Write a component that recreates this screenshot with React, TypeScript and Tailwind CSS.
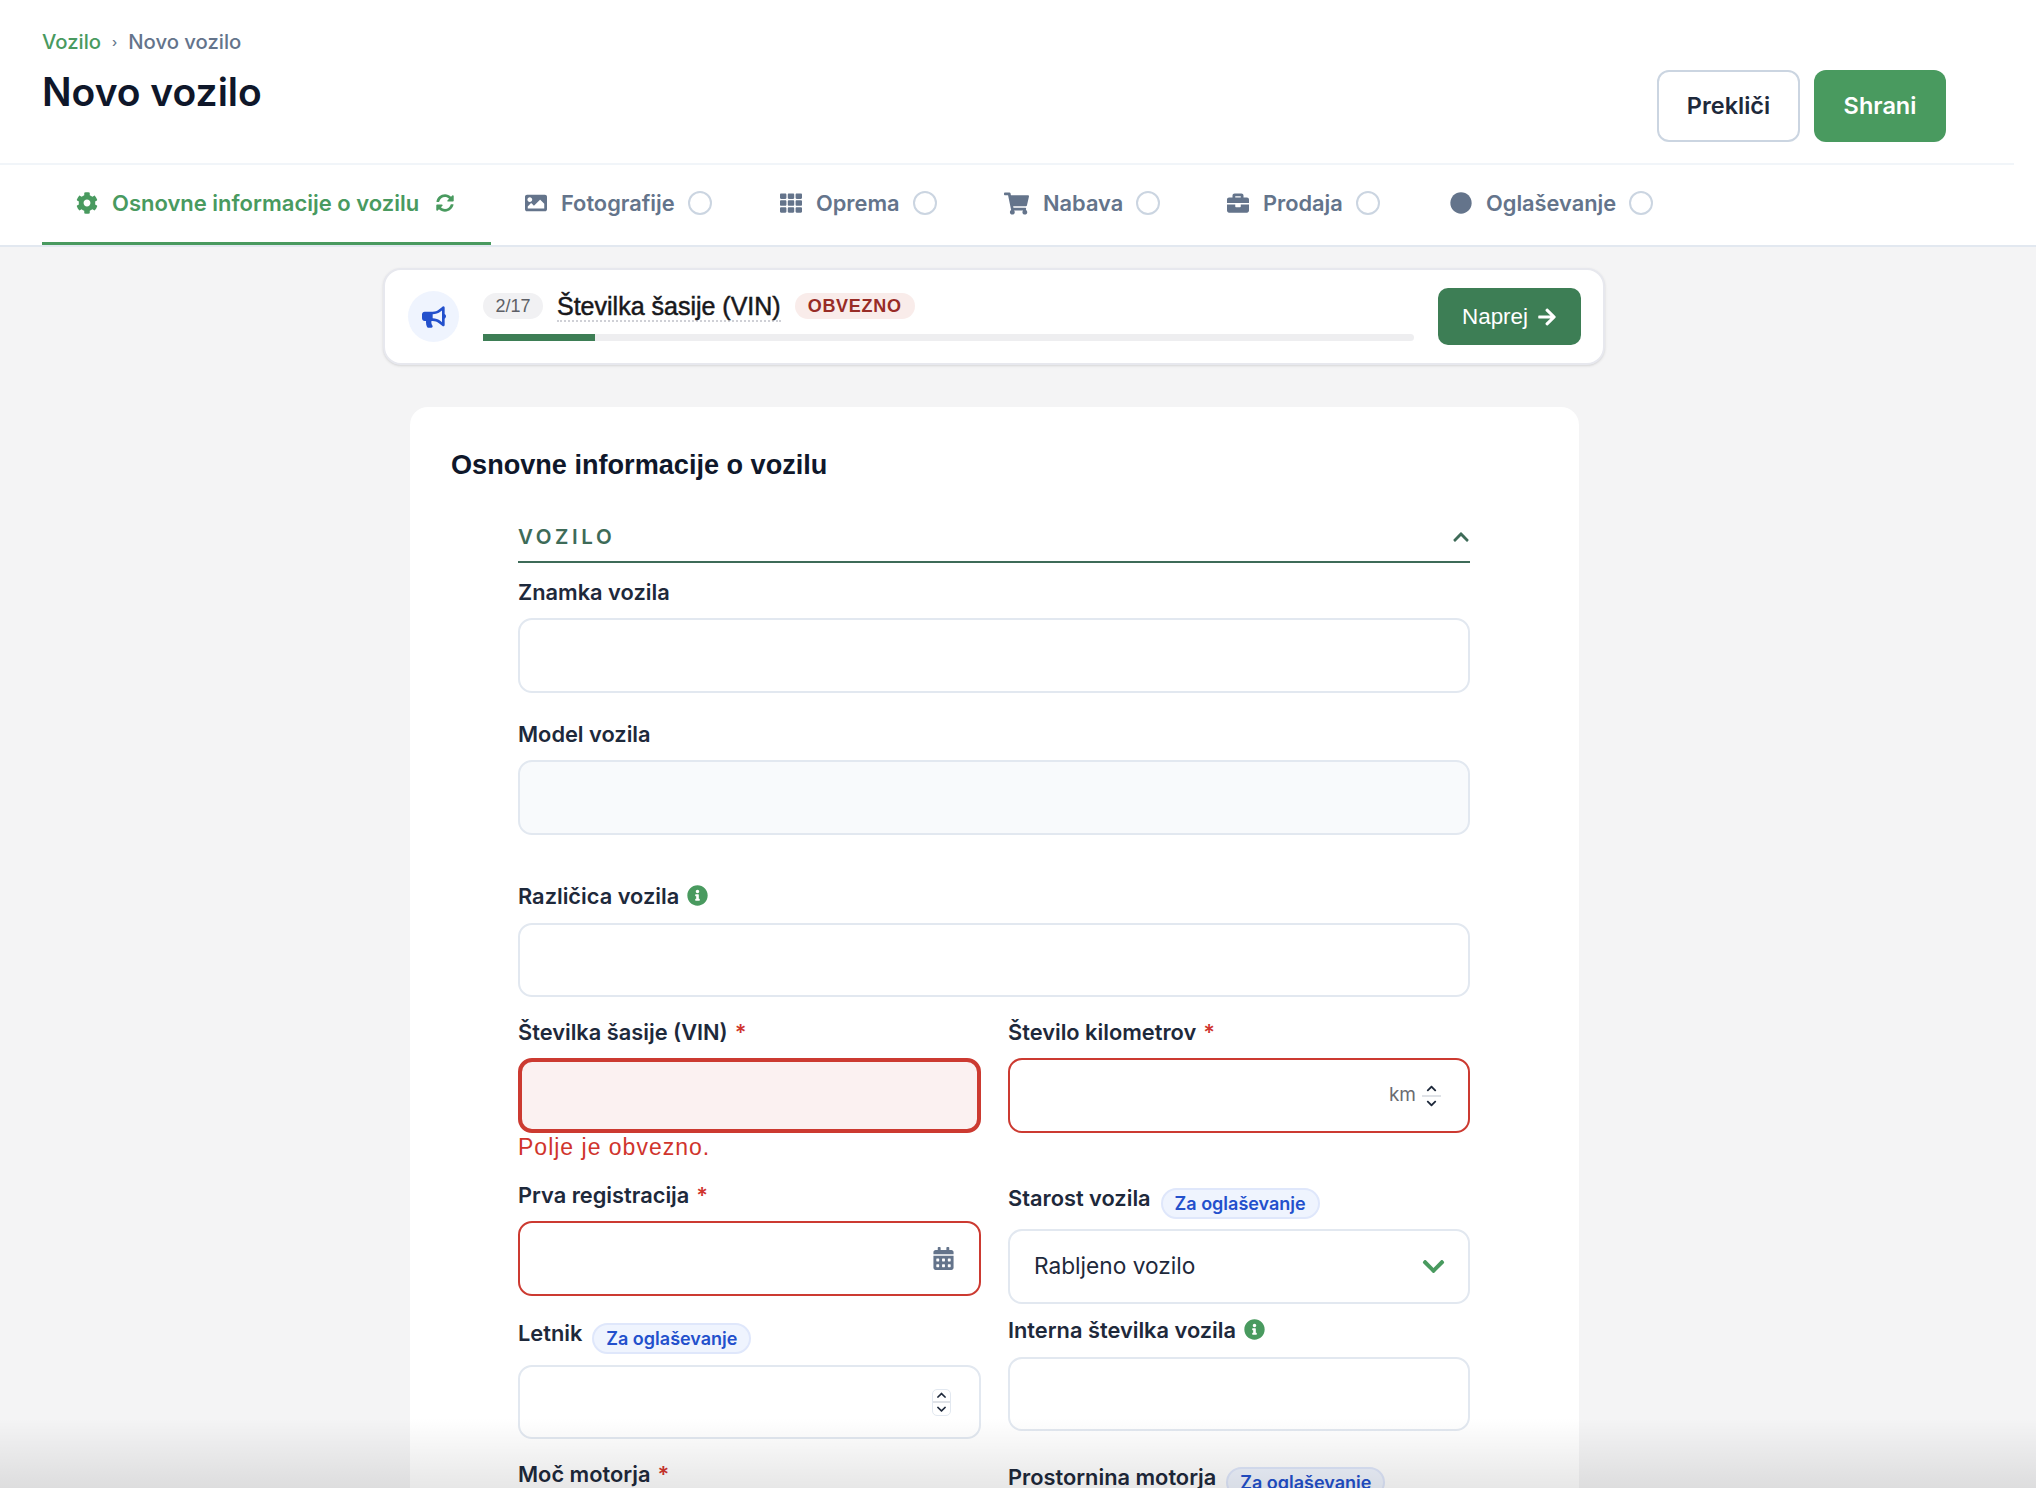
import React from "react";
import {
  FaCog, FaSyncAlt, FaImage, FaTh, FaShoppingCart, FaBriefcase, FaCircle, FaBullhorn,
  FaArrowRight, FaChevronUp, FaChevronDown, FaInfoCircle, FaCalendarAlt,
} from "react-icons/fa";

const Badge = () => (
  <span className="ml-[10px] mt-[3px] inline-flex h-[31px] w-[159px] items-center justify-center rounded-full border-2 border-[#dfe7fb] bg-[#eff4fe] text-[18px] font-semibold text-[#2350cc]">
    Za oglaševanje
  </span>
);

const Label = ({ text, req, info, badge, className = "" }: { text: string; req?: boolean; info?: boolean; badge?: boolean; className?: string }) => (
  <div className={`flex items-start text-[21.8px] font-semibold leading-[26px] text-[#1e293b] ${className}`}>
    <span>{text}</span>
    {req && <span className="ml-[7px] text-[#d0352e]">*</span>}
    {info && <FaInfoCircle className="ml-[8px] mt-[2px] text-[21px] text-[#499a5f]" />}
    {badge && <Badge />}
  </div>
);

const Box = ({ tone = "border-2 border-[#e2e8f0] bg-white", className = "h-[75px]", children }: { tone?: string; className?: string; children?: React.ReactNode }) => (
  <div className={`flex items-center rounded-[14px] ${tone} ${className}`}>
    {children}
  </div>
);

const RED = "border-2 border-[#cc3a31] bg-white";

const Stepper = ({ boxed }: { boxed?: boolean }) => (
  <span className={`flex h-[27px] w-[19px] flex-col items-center justify-center rounded-[5px] text-[#1e293b] ${boxed ? "border border-[#e2e8f0]" : ""}`}>
    <FaChevronUp className="text-[11px]" />
    <span className="my-[1px] h-[2px] w-full bg-[#dfe2e7]" />
    <FaChevronDown className="text-[11px]" />
  </span>
);

const Tab = ({ icon, text, w, iconBox = "w-[23px] text-[22px]" }: { icon: React.ReactNode; text: string; w: string; iconBox?: string }) => (
  <div className={`flex h-[80px] items-center pb-[4px] pl-[33px] text-[#64748b] ${w}`}>
    <span className={`flex justify-center ${iconBox}`}>{icon}</span>
    <span className="ml-[14px] text-[21.8px] font-semibold">{text}</span>
    <span className="ml-[13px] h-[24px] w-[24px] rounded-full border-2 border-[#cbd5e1]" />
  </div>
);

export default function App() {
  return (
    <div className="relative h-[1488px] w-[2036px] overflow-hidden bg-[#f4f4f5] font-['Inter',sans-serif]">
      <header className="h-[165px] bg-white pr-[22px]">
        <div className="flex h-[165px] items-start justify-between border-b-2 border-[#f1f5f9] pl-[42px]">
          <div>
            <div className="mt-[30px] flex h-[24px] items-center text-[20.3px] font-medium leading-[24px]">
              <span className="text-[#499a5f]">Vozilo</span>
              <span className="mx-[11px] text-[13px] text-[#64748b]">›</span>
              <span className="text-[#64748b]">Novo vozilo</span>
            </div>
            <h1 className="mt-[13px] text-[39px] font-semibold leading-[50px] text-[#0f172a]">Novo vozilo</h1>
          </div>
          <div className="mr-[68px] mt-[70px] flex gap-[14px]">
            <button className="h-[72px] w-[143px] rounded-[12px] border-2 border-[#cbd5e1] bg-white text-[23.5px] font-semibold text-[#1e293b]">Prekliči</button>
            <button className="h-[72px] w-[132px] rounded-[12px] bg-[#499a5f] text-[23.5px] font-semibold text-white">Shrani</button>
          </div>
        </div>
      </header>

      <nav className="flex h-[82px] border-b-2 border-[#e2e8f0] bg-white pl-[42px]">
        <div className="flex h-[80px] w-[449px] items-center border-b-[3px] border-[#499a5f] pb-[1px] pl-[34px] text-[#499a5f]">
          <FaCog className="text-[22px]" />
          <span className="ml-[14px] text-[22px] font-semibold">Osnovne informacije o vozilu</span>
          <FaSyncAlt className="ml-[17px] text-[18px]" />
        </div>
        <Tab icon={<FaImage />} text="Fotografije" w="w-[255px]" />
        <Tab icon={<FaTh />} text="Oprema" w="w-[224px]" />
        <Tab icon={<FaShoppingCart />} text="Nabava" w="w-[223px]" iconBox="w-[26px] text-[25px]" />
        <Tab icon={<FaBriefcase />} text="Prodaja" w="w-[223px]" />
        <Tab icon={<FaCircle />} text="Oglaševanje" w="w-[260px]" />
      </nav>

      <main>
        <div className="ml-[383px] mt-[21px] flex h-[97px] w-[1222px] items-center rounded-[18px] border-2 border-[#e7e8ee] bg-white pl-[23px] pr-[21px] font-['Liberation_Sans',sans-serif] shadow-sm">
          <span className="flex h-[51px] w-[51px] shrink-0 items-center justify-center rounded-full bg-[#eff4fe] text-[24px] text-[#2350cc]">
            <FaBullhorn />
          </span>
          <div className="ml-[24px] w-[931px]">
            <div className="flex h-[27px] items-center">
              <span className="flex h-[26px] w-[60px] items-center justify-center rounded-full bg-[#f1f1f3] text-[18px] text-[#5d5f66]">2/17</span>
              <span className="ml-[14px] mt-[2px] border-b-2 border-dotted border-[#cfd0d6] text-[25px] leading-[28px] text-[#18181b] [-webkit-text-stroke:0.5px_#18181b]">Številka šasije (VIN)</span>
              <span className="ml-[14px] flex h-[26px] w-[120px] items-center justify-center rounded-full bg-[#f9ecea] text-[18px] font-bold tracking-[0.7px] text-[#982c26]">OBVEZNO</span>
            </div>
            <div className="mt-[14px] h-[7px] rounded-full bg-[#eeeef0]">
              <div className="h-[7px] w-[112px] bg-[#3d7e55]" />
            </div>
          </div>
          <button className="ml-[24px] flex h-[57px] w-[143px] items-center justify-center gap-[9px] rounded-[10px] bg-[#3d7e55] text-[22.4px] text-white">
            Naprej <FaArrowRight className="text-[20px]" />
          </button>
        </div>

        <section className="ml-[410px] mt-[42px] h-[1100px] w-[1169px] rounded-[18px] bg-white pl-[41px] pt-[38px]">
          <h2 className="font-['Liberation_Sans',sans-serif] text-[27.1px] font-bold leading-[40px] text-[#0f172a]">Osnovne informacije o vozilu</h2>
          <div className="ml-[67px] mt-[41px] w-[952px]">
            <div className="flex h-[37px] items-start justify-between border-b-2 border-[#3e6b58] text-[#3e6b58]">
              <span className="text-[20.5px] font-semibold leading-[22px] tracking-[3.6px]">VOZILO</span>
              <FaChevronUp className="mt-[2px] text-[18px]" />
            </div>
            <Label text="Znamka vozila" className="mt-[16px]" />
            <div className="mt-[13px]"><Box /></div>
            <Label text="Model vozila" className="mt-[28px]" />
            <div className="mt-[13px]"><Box tone="border-2 border-[#e2e8f0] bg-[#f8fafc]" /></div>
            <Label text="Različica vozila" info className="mt-[48px]" />
            <div className="mt-[14px]"><Box className="h-[74px]" /></div>

            <div className="mt-[22px] grid grid-cols-[463px_462px] gap-x-[27px]">
              <div>
                <Label text="Številka šasije (VIN)" req />
                <div className="mt-[13px]"><Box tone="border-[4px] border-[#cc3a31] bg-[#fbf1f1]" className="h-[75px]" /></div>
                <div className="font-['Liberation_Sans',sans-serif] text-[23px] leading-[28px] tracking-[1px] text-[#d0342c]">Polje je obvezno.</div>
                <Label text="Prva registracija" req className="mt-[21px]" />
                <div className="mt-[13px]">
                  <Box tone={RED} className="h-[75px] justify-end pr-[24px]">
                    <FaCalendarAlt className="text-[23px] text-[#64748b]" />
                  </Box>
                </div>
                <Label text="Letnik" badge className="mt-[24px]" />
                <div className="mt-[11px]">
                  <Box className="h-[74px] justify-end pr-[28px]">
                    <Stepper boxed />
                  </Box>
                </div>
                <Label text="Moč motorja" req className="mt-[22px]" />
              </div>
              <div>
                <Label text="Število kilometrov" req />
                <div className="mt-[13px]">
                  <Box tone={RED} className="h-[75px] justify-end pr-[27px]">
                    <span className="mr-[6px] text-[19px] text-[#6b6b70]">km</span>
                    <Stepper />
                  </Box>
                </div>
                <Label text="Starost vozila" badge className="mt-[52px]" />
                <div className="mt-[10px]">
                  <Box className="h-[75px] justify-between pl-[24px] pr-[22px] text-[22.7px] text-[#1e293b]">
                    <span>Rabljeno vozilo</span>
                    <FaChevronDown className="text-[25px] text-[#499a5f]" />
                  </Box>
                </div>
                <Label text="Interna številka vozila" info className="mt-[13px]" />
                <div className="mt-[14px]"><Box className="h-[74px]" /></div>
                <Label text="Prostornina motorja" badge className="mt-[33px]" />
              </div>
            </div>
          </div>
        </section>
      </main>

      <div className="absolute inset-x-0 bottom-0 h-[70px] bg-gradient-to-b from-transparent to-[#00000018]" />
    </div>
  );
}
